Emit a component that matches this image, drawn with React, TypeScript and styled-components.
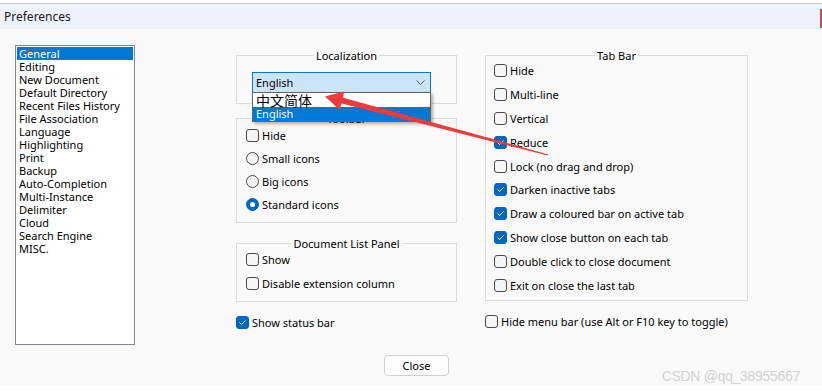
import React from 'react';
import styled, { createGlobalStyle } from 'styled-components';

const categories = [
	'General', 'Editing', 'New Document', 'Default Directory', 'Recent Files History',
	'File Association', 'Language', 'Highlighting', 'Print', 'Backup', 'Auto-Completion',
	'Multi-Instance', 'Delimiter', 'Cloud', 'Search Engine', 'MISC.',
];

const tabBarOptions = [
	{ label: 'Hide', checked: false },
	{ label: 'Multi-line', checked: false },
	{ label: 'Vertical', checked: false },
	{ label: 'Reduce', checked: true },
	{ label: 'Lock (no drag and drop)', checked: false },
	{ label: 'Darken inactive tabs', checked: true },
	{ label: 'Draw a coloured bar on active tab', checked: true },
	{ label: 'Show close button on each tab', checked: true },
	{ label: 'Double click to close document', checked: false },
	{ label: 'Exit on close the last tab', checked: false },
];

const CheckBox = ({ checked }: { checked?: boolean }) => (
	<Box $checked={checked}>
		{checked && (
			<svg width='11' height='11' viewBox='0 0 11 11'>
				<polyline points='2.5,5.5 4.5,7.5 8.5,3.5' fill='none' stroke='#fff' strokeWidth='1' />
			</svg>
		)}
	</Box>
);

const Check = ({ label, checked, h = 24 }: { label: string; checked?: boolean; h?: number }) => (
	<Row $h={h}>
		<CheckBox checked={checked} />
		<span>{label}</span>
	</Row>
);

const Radio = ({ label, selected, h = 23 }: { label: string; selected?: boolean; h?: number }) => (
	<Row $h={h}>
		<Circle $selected={selected} />
		<span>{label}</span>
	</Row>
);

const App = () => {
	return (
		<Window>
			<GlobalStyle />
			<TitleBar>
				<span>Preferences</span>
				<CloseEdge />
			</TitleBar>
			<Body>
				<Main>
					<CategoryList>
						{categories.map((c, i) => (
							<Category key={c} $active={i === 0}>{c}</Category>
						))}
					</CategoryList>

					<Column $width={221} $ml={101}>
						<Group $mt={4} $pl={15} $pb={10}>
							<Legend $mb={10}>Localization</Legend>
							<ComboWrap>
								<Combo>
									<span>English</span>
									<svg width='9' height='5' viewBox='0 0 9 5'>
										<polyline points='0.5,0.5 4.5,4.5 8.5,0.5' fill='none' stroke='#555' strokeWidth='1' />
									</svg>
								</Combo>
								<DropList>
									<DropItem $cjk>中文简体</DropItem>
									<DropItem $active>English</DropItem>
								</DropList>
							</ComboWrap>
						</Group>

						<Group $mt={8} $pl={9} $pb={6}>
							<Legend $mb={-1}>Toolbar</Legend>
							<Check label='Hide' h={23} />
							<Radio label='Small icons' />
							<Radio label='Big icons' />
							<Radio label='Standard icons' selected />
						</Group>

						<Group $mt={14} $pl={9} $pb={6}>
							<Legend $mb={-3}>Document List Panel</Legend>
							<Check label='Show' />
							<Check label='Disable extension column' />
						</Group>

						<Spacer $h={8} />
						<Check label='Show status bar' checked />
					</Column>

					<Column $width={263} $ml={28}>
						<Group $mt={4} $pl={8} $pb={3}>
							<Legend $mb={-3.5}>Tab Bar</Legend>
							{tabBarOptions.map((o) => (
								<Check key={o.label} label={o.label} checked={o.checked} h={23.9} />
							))}
						</Group>
						<Spacer $h={8} />
						<Check label='Hide menu bar (use Alt or F10 key to toggle)' />
					</Column>
				</Main>

				<Footer>
					<Button>Close</Button>
				</Footer>
				<Watermark>CSDN @qq_38955667</Watermark>
			</Body>

			<Annotation width='822' height='392' viewBox='0 0 822 392'>
				<polygon
					points='325,96.5 343.8,91.6 343.3,97.7 548.2,154.4 547.8,155.6 341.7,103.5 339.2,109.5'
					fill='#ef3b3b'
				/>
			</Annotation>
		</Window>
	)
}

export default App;

const GlobalStyle = createGlobalStyle`
	html, body {
		margin: 0;
		padding: 0;
		background: #ffffff;
	}
	body {
		font-family: "Noto Sans", "Noto Sans CJK SC", sans-serif;
		font-size: 11px;
		color: #000;
	}
	* {
		box-sizing: border-box;
	}
`

const Window = styled.div`
	position: relative;
	width: 822px;
	height: 392px;
	overflow: hidden;
`

const TitleBar = styled.div`
	margin-top: 3px;
	height: 26px;
	border-top: 1px solid #c6c6c6;
	background: #eef2fb;
	display: flex;
	align-items: center;
	justify-content: space-between;
	padding-left: 4px;
	font-size: 12px;
	color: #1b1b1b;
`

const CloseEdge = styled.div`
	width: 2px;
	height: 19px;
	margin-top: 3px;
	background: #c94a4a;
`

const Body = styled.div`
	position: relative;
	height: 357px;
	background: #f9f9f9;
`

const Main = styled.div`
	display: flex;
	align-items: flex-start;
	padding: 16px 0 0 15px;
`

const CategoryList = styled.div`
	width: 120px;
	height: 300px;
	border: 1px solid #828790;
	background: #fff;
	padding: 1px;
`

const Category = styled.div<{ $active?: boolean }>`
	height: 13px;
	line-height: 13px;
	padding-left: 2px;
	white-space: nowrap;
	background: ${(p) => (p.$active ? '#0078d7' : 'transparent')};
	color: ${(p) => (p.$active ? '#fff' : '#000')};
`

const Column = styled.div<{ $width: number; $ml: number }>`
	display: flex;
	flex-direction: column;
	width: ${(p) => p.$width}px;
	margin-left: ${(p) => p.$ml}px;
`

const Group = styled.fieldset<{ $mt: number; $pl: number; $pb: number }>`
	margin: ${(p) => p.$mt}px 0 0 0;
	padding: 0 ${(p) => p.$pl}px ${(p) => p.$pb}px;
	border: 1px solid #dcdcdc;
	min-width: 0;
`

const Legend = styled.legend<{ $mb: number }>`
	margin: 0 auto ${(p) => p.$mb}px;
	padding: 0 2px;
	line-height: 13px;
	height: 13px;
`

const Row = styled.div<{ $h: number }>`
	display: flex;
	align-items: center;
	gap: 3px;
	height: ${(p) => p.$h}px;
	white-space: nowrap;
`

const Box = styled.span<{ $checked?: boolean }>`
	width: 13px;
	height: 13px;
	flex-shrink: 0;
	display: flex;
	align-items: center;
	justify-content: center;
	border-radius: 3px;
	border: 1px solid ${(p) => (p.$checked ? '#0067c0' : '#4a4a4a')};
	background: ${(p) => (p.$checked ? '#0067c0' : '#f5f5f5')};
`

const Circle = styled.span<{ $selected?: boolean }>`
	width: 13px;
	height: 13px;
	flex-shrink: 0;
	border-radius: 50%;
	border: 1px solid ${(p) => (p.$selected ? '#0067c0' : '#4a4a4a')};
	background: ${(p) => (p.$selected ? '#0067c0' : '#f5f5f5')};
	display: flex;
	align-items: center;
	justify-content: center;
	&::after {
		content: '';
		display: ${(p) => (p.$selected ? 'block' : 'none')};
		width: 5px;
		height: 5px;
		border-radius: 50%;
		background: #fff;
	}
`

const ComboWrap = styled.div`
	position: relative;
	width: 179px;
`

const Combo = styled.div`
	height: 21px;
	border: 1px solid #0078d7;
	background: #cce4f7;
	display: flex;
	align-items: center;
	justify-content: space-between;
	padding: 0 5px 0 3px;
`

const DropList = styled.div`
	position: absolute;
	top: calc(100% - 1px);
	left: 0;
	width: 179px;
	border: 1px solid #646464;
	background: #fff;
	box-shadow: 2px 2px 3px rgba(0, 0, 0, 0.3);
	z-index: 2;
`

const DropItem = styled.div<{ $active?: boolean; $cjk?: boolean }>`
	height: 14px;
	line-height: 14px;
	padding-left: 3px;
	font-size: ${(p) => (p.$cjk ? '14px' : '11px')};
	font-family: ${(p) => (p.$cjk ? '"Noto Sans CJK SC", sans-serif' : 'inherit')};
	background: ${(p) => (p.$active ? '#0078d7' : '#fff')};
	color: ${(p) => (p.$active ? '#fff' : '#000')};
`

const Spacer = styled.div<{ $h: number }>`
	height: ${(p) => p.$h}px;
`

const Footer = styled.div`
	display: flex;
	justify-content: center;
	padding: 10px 0 0 11px;
`

const Button = styled.button`
	width: 65px;
	height: 21px;
	border: 1px solid #d0d0d0;
	border-radius: 4px;
	background: #fdfdfd;
	font-family: inherit;
	font-size: 11px;
	color: #000;
	padding: 0;
`

const Watermark = styled.div`
	position: absolute;
	right: 22px;
	bottom: 2px;
	font-family: "Liberation Sans", sans-serif;
	font-size: 14px;
	line-height: 16px;
	color: #d2d2d2;
	letter-spacing: -0.3px;
`

const Annotation = styled.svg`
	position: absolute;
	left: 0;
	top: 0;
	pointer-events: none;
	z-index: 5;
`
